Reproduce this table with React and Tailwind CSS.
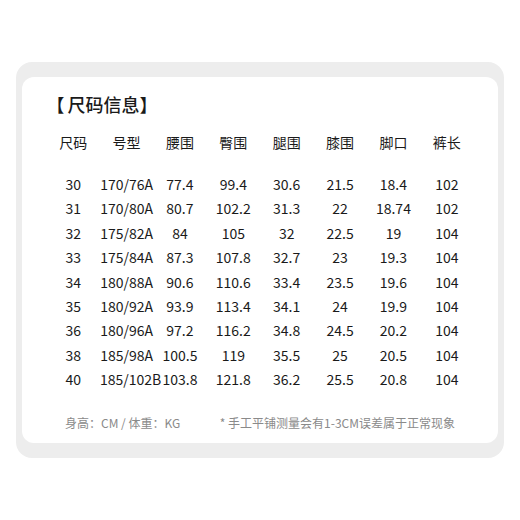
import React from "react";

const headers = ["尺码", "号型", "腰围", "臀围", "腿围", "膝围", "脚口", "裤长"];
const rows = [
  ["30", "170/76A", "77.4", "99.4", "30.6", "21.5", "18.4", "102"],
  ["31", "170/80A", "80.7", "102.2", "31.3", "22", "18.74", "102"],
  ["32", "175/82A", "84", "105", "32", "22.5", "19", "104"],
  ["33", "175/84A", "87.3", "107.8", "32.7", "23", "19.3", "104"],
  ["34", "180/88A", "90.6", "110.6", "33.4", "23.5", "19.6", "104"],
  ["35", "180/92A", "93.9", "113.4", "34.1", "24", "19.9", "104"],
  ["36", "180/96A", "97.2", "116.2", "34.8", "24.5", "20.2", "104"],
  ["38", "185/98A", "100.5", "119", "35.5", "25", "20.5", "104"],
  ["40", "185/102B", "103.8", "121.8", "36.2", "25.5", "20.8", "104"],
];

export default function App() {
  return (
    <div
      className="w-[520px] h-[520px] bg-white pt-[62px] px-[16px]"
      style={{ fontFamily: '"Noto Sans CJK SC", "Noto Sans", sans-serif' }}
    >
      <div className="rounded-[16px] bg-[#ededed] pt-[15px] pb-[15px] px-[6px]">
        <div className="rounded-[12px] bg-white pt-[15px] pb-[10px]">
          <div className="w-[427px] mx-auto">
            <div className="flex h-[24px] leading-[24px] text-[18px] font-medium text-[#1a1a1a]">
              <span>【</span>
              <span className="ml-[3px]">尺码信息】</span>
            </div>
            <div className="grid grid-cols-8 h-[24px] mt-[14px] items-center text-[14px] text-[#1a1a1a]">
              {headers.map((h) => (
                <div key={h} className="text-center leading-[24px]">
                  {h}
                </div>
              ))}
            </div>
            <div className="mt-[17.8px]">
              {rows.map((r) => (
                <div
                  key={r[0]}
                  className="grid grid-cols-8 h-[24.4px] items-center text-[14px] text-[#1a1a1a]"
                >
                  {r.map((c, i) => (
                    <div key={i} className="text-center leading-[24px] whitespace-nowrap">
                      {c}
                    </div>
                  ))}
                </div>
              ))}
            </div>
          </div>
          <div className="flex justify-between px-[43px] mt-[21.6px] h-[20px] leading-[20px] text-[12px] text-[#8a8a8a]">
            <span>身高：CM / 体重：KG</span>
            <span>* 手工平铺测量会有1-3CM误差属于正常现象</span>
          </div>
        </div>
      </div>
    </div>
  );
}
